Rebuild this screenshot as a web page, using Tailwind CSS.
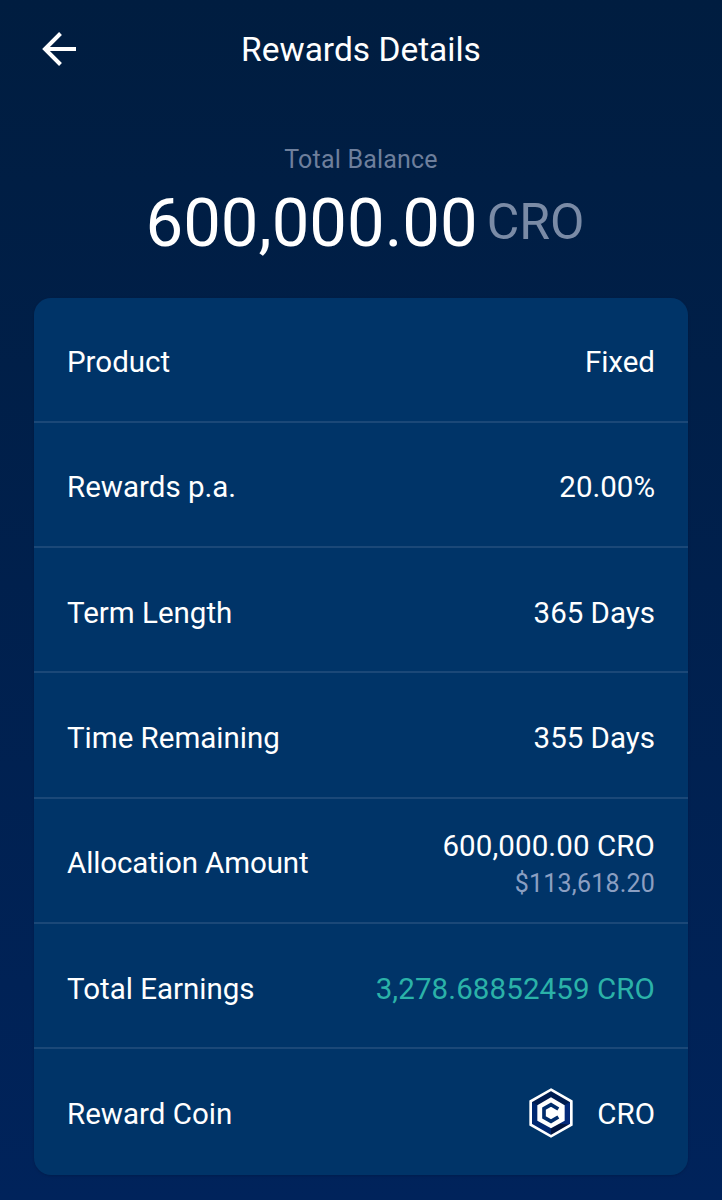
<!doctype html>
<html lang="en">

<head>
    <meta charset="UTF-8">
    <meta name="viewport" content="width=device-width, initial-scale=1.0">
    <script src="https://cdn.jsdelivr.net/npm/@tailwindcss/browser@4"></script>
    <title>Rewards Details</title>
</head>

<body class="h-[1200px] overflow-hidden bg-linear-to-b from-[#001d40] to-[#00235b] font-['Roboto',sans-serif] text-white">

    <!-- Header -->
    <header class="grid h-[100px] grid-cols-[1fr_auto_1fr] items-center pl-[42px]">
        <a href="#" aria-label="Back" class="-mt-0.5">
            <svg width="34" height="34" viewBox="0 0 34 34" fill="none" stroke="currentColor" stroke-width="4">
                <path d="M34 17H4M18.500 1.500L3 17l15.500 15.500"></path>
            </svg>
        </a>
        <h1 class="-ml-[42px] text-[33.500px] leading-none">Rewards Details</h1>
    </header>

    <!-- Balance -->
    <section class="flex h-[197.500px] flex-col items-center pt-[44px]">
        <div class="text-[25px] leading-8 tracking-[0.2px] text-[#6e7f9c]">Total Balance</div>
        <div class="flex items-start gap-[9px] pl-2">
            <span class="text-[67px] leading-[94px]">600,000.00</span>
            <span class="text-[50px] leading-[92px] text-[#7a8ba6]">CRO</span>
        </div>
    </section>

    <!-- Details -->
    <main class="mx-[34px] grid h-[877px] grid-rows-7 divide-y-2 divide-[#1b4878] rounded-[17px] bg-[#003468] text-[29.500px] leading-9 shadow-sm">
        <div class="flex items-center justify-between px-[33px] pt-[5px]">
            <span>Product</span>
            <span>Fixed</span>
        </div>
        <div class="flex items-center justify-between px-[33px] pt-[6px]">
            <span>Rewards p.a.</span>
            <span>20.00%</span>
        </div>
        <div class="flex items-center justify-between px-[33px] pt-[6px]">
            <span>Term Length</span>
            <span>365 Days</span>
        </div>
        <div class="flex items-center justify-between px-[33px] pt-[6px]">
            <span>Time Remaining</span>
            <span>355 Days</span>
        </div>
        <div class="flex items-center justify-between px-[33px] pt-[6px]">
            <span class="-tracking-[0.1px]">Allocation Amount</span>
            <div class="pt-1 text-right">
                <div class="tracking-[0.1px]">600,000.00 CRO</div>
                <div class="pt-0.5 text-[25px] tracking-[0.2px] text-[#8b9fc2]">$113,618.20</div>
            </div>
        </div>
        <div class="flex items-center justify-between px-[33px] pt-[6px]">
            <span>Total Earnings</span>
            <span class="tracking-[0.1px] text-[#2bb2a8]">3,278.68852459 CRO</span>
        </div>
        <div class="flex items-center justify-between px-[33px] pt-[5px]">
            <span>Reward Coin</span>
            <div class="flex items-center gap-6">
                <svg width="44" height="50" viewBox="0 0 132 150" class="-mt-0.5">
                    <path d="M66 5L127 40V110L66 145L5 110V40Z" fill="#002870"></path>
                    <path d="M66 5L127 40L66 75L5 40Z" fill="#001c50"></path>
                    <path d="M127 40V110L66 145V75Z" fill="#03297a"></path>
                    <path d="M127 110L66 145V105Z" fill="#001440"></path>
                    <path d="M66 5L127 40V110L66 145L5 110V40Z" fill="none" stroke="#fff" stroke-width="8"></path>
                    <path d="M66 28L107 52V98L66 121L25 98V52Z" fill="#fff"></path>
                    <path d="M88 63L66 50L45 62V88L66 100L88 87" fill="none" stroke="#002c6b" stroke-width="11"></path>
                </svg>
                <span>CRO</span>
            </div>
        </div>
    </main>

</body>

</html>
